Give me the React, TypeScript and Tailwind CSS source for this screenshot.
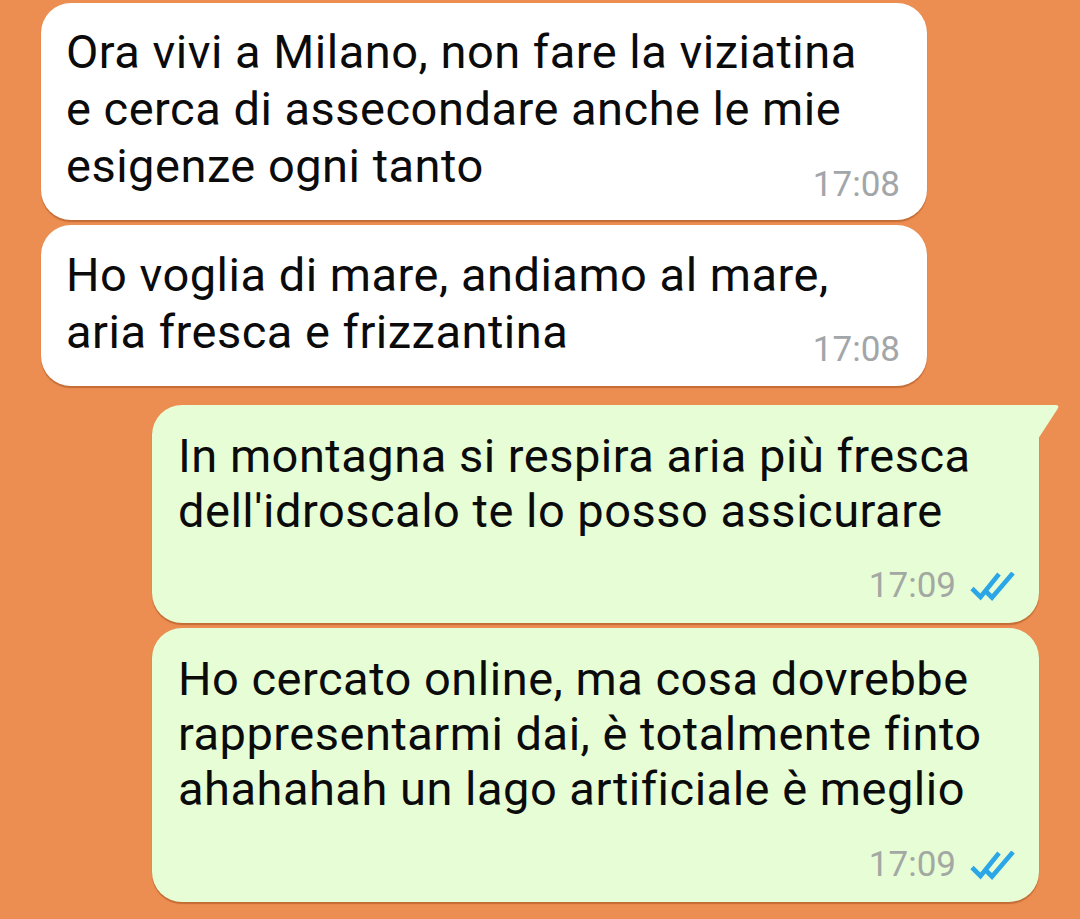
import React from "react";

const font = { fontFamily: "Roboto, 'Noto Sans', sans-serif" };

function Ticks() {
  return (
    <svg width="47" height="29" viewBox="0 0 47 29" fill="none" className="block">
      <path d="M3 16.5 L11.5 25 L30 2" stroke="#2ba6e6" strokeWidth="4.6" strokeLinejoin="miter" />
      <path d="M17.5 20 L23 25.5 L44 1" stroke="#2ba6e6" strokeWidth="4.6" strokeLinejoin="miter" />
    </svg>
  );
}

function Incoming({
  lines,
  time,
  pt,
  overlap,
  pb,
}: {
  lines: string[];
  time: string;
  pt: string;
  overlap: string;
  pb: string;
}) {
  return (
    <div
      className={
        "ml-[41px] w-[886px] rounded-[30px] bg-white pl-[25px] pr-[27px] shadow-[0_1.5px_1px_rgba(120,50,0,0.35)] " +
        pt +
        " " +
        pb
      }
    >
      <div className="text-[47px] leading-[57px] tracking-[0.5px] text-[#0b0b0b]">
        {lines.map((l, i) => (
          <div key={i}>{l}</div>
        ))}
      </div>
      <div className={"flex justify-end text-[35px] leading-[40px] text-[#a2a6a9] " + overlap}>
        {time}
      </div>
    </div>
  );
}

function Outgoing({
  lines,
  time,
  tail,
  gap,
}: {
  lines: string[];
  time: string;
  tail?: boolean;
  gap: string;
}) {
  return (
    <div
      className={
        "relative ml-[152px] w-[887px] bg-[#e6fdd5] pl-[26px] pr-[23px] pt-[23px] pb-[17px] shadow-[0_1.5px_1px_rgba(120,50,0,0.35)] " +
        (tail ? "rounded-[30px] rounded-tr-none" : "rounded-[30px]")
      }
    >
      {tail && (
        <svg
          width="21"
          height="33"
          viewBox="0 0 21 33"
          className="absolute left-full top-0"
          fill="#e6fdd5"
        >
          <path d="M0 0 L16.5 0 Q21 0 18.5 4 L0 32.5 Z" />
        </svg>
      )}
      <div className="text-[47px] leading-[55px] tracking-[0.5px] text-[#0b0b0b]">
        {lines.map((l, i) => (
          <div key={i}>{l}</div>
        ))}
      </div>
      <div
        className={
          "flex items-center justify-end gap-[13px] text-[35px] leading-[40px] text-[#a3a8a3] " + gap
        }
      >
        <span>{time}</span>
        <Ticks />
      </div>
    </div>
  );
}

export default function App() {
  return (
    <div className="h-[919px] w-full overflow-hidden bg-[#ec8d51] pt-[3px]" style={font}>
      <div className="flex flex-col">
        <Incoming
          lines={[
            "Ora vivi a Milano, non fare la viziatina",
            "e cerca di assecondare anche le mie",
            "esigenze ogni tanto",
          ]}
          time="17:08"
          pt="pt-[20px]"
          overlap="-mt-[29px]"
          pb="pb-[15px]"
        />
        <div className="h-[5px]" />
        <Incoming
          lines={["Ho voglia di mare, andiamo al mare,", "aria fresca e frizzantina"]}
          time="17:08"
          pt="pt-[21px]"
          overlap="-mt-[30px]"
          pb="pb-[16px]"
        />
        <div className="h-[19px]" />
        <Outgoing
          tail
          lines={["In montagna si respira aria più fresca", "dell'idroscalo te lo posso assicurare"]}
          time="17:09"
          gap="mt-[28px]"
        />
        <div className="h-[5px]" />
        <Outgoing
          lines={[
            "Ho cercato online, ma cosa dovrebbe",
            "rappresentarmi dai, è totalmente finto",
            "ahahahah un lago artificiale è meglio",
          ]}
          time="17:09"
          gap="mt-[29px]"
        />
      </div>
    </div>
  );
}
